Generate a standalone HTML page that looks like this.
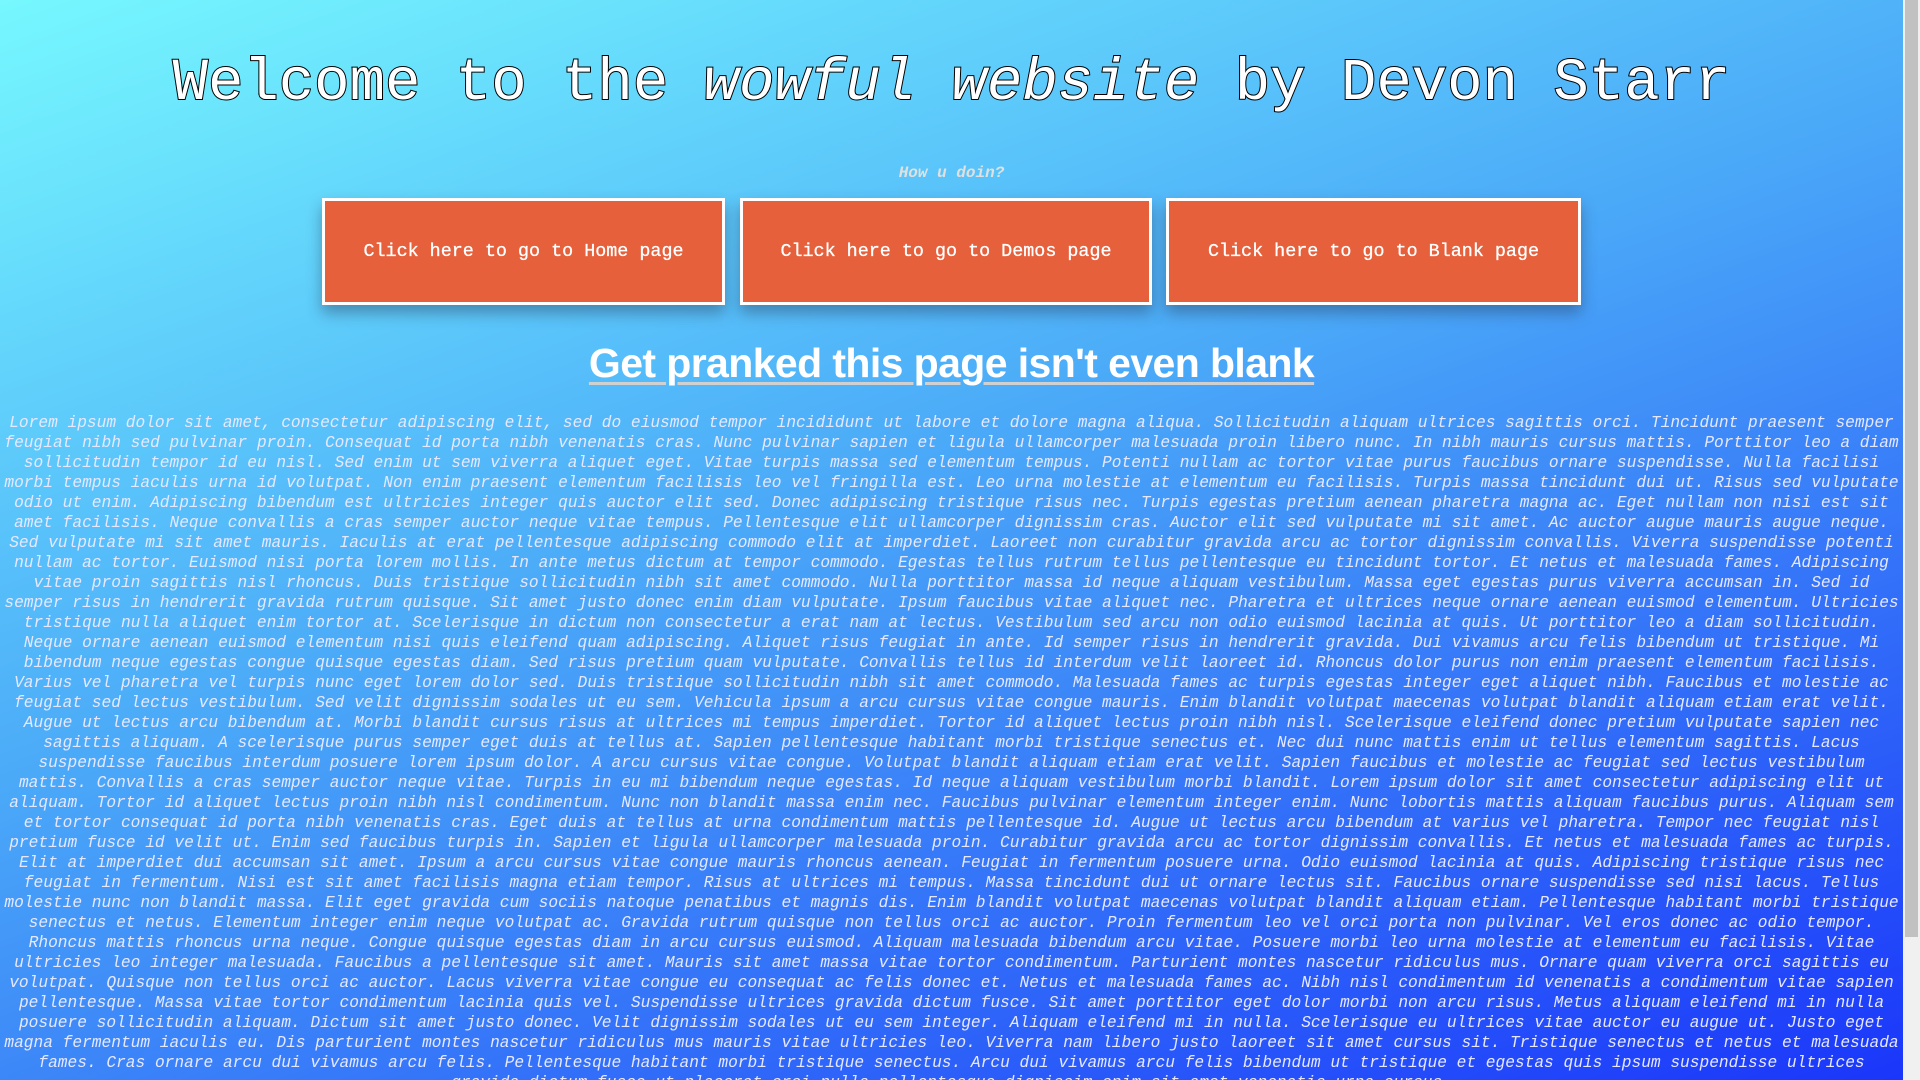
<!DOCTYPE html>
<html><head><meta charset="utf-8"><style>
html,body{margin:0;padding:0;width:1920px;height:1080px;overflow:hidden}
body{background:linear-gradient(160deg,#76f8fe 0%,#4aa8f8 45%,#1a35fa 100%);font-family:"Liberation Mono",monospace;position:relative}
.main{position:absolute;left:0;top:0;width:1903px;height:1080px;overflow:hidden}
h1{margin:0;position:absolute;top:44px;left:0;width:1903px;text-align:center;font-size:59px;font-weight:normal;color:#fff;line-height:80px;-webkit-text-stroke:2px #000;paint-order:stroke fill;white-space:nowrap}
.sub{position:absolute;top:164px;width:1903px;text-align:center;font-size:16px;font-style:italic;font-weight:bold;color:#e0e0e0}
.btn{position:absolute;top:198px;height:107px;box-sizing:border-box;border:3px solid #fff;background:#e6603c;color:#fff;font-size:18.4px;display:flex;align-items:center;justify-content:center;box-shadow:0 8px 14px rgba(40,60,90,.45);-webkit-text-stroke:0.3px #fff}
.h2{position:absolute;top:340px;width:1903px;text-align:center;font-family:"Liberation Sans",sans-serif;font-weight:bold;font-size:41px;letter-spacing:-0.6px;color:#fff;text-decoration:underline;text-decoration-color:#d0d0d0;text-decoration-thickness:3px;text-underline-offset:5px}
.lorem{position:absolute;top:413px;left:4px;width:1895px;text-align:center;font-style:italic;font-size:16.2px;line-height:20px;color:#e6e8ff;margin:0}
.sb{position:absolute;right:0;top:0;width:17px;height:1080px;background:#f0f0f0}
.th{position:absolute;left:2px;top:0;width:13px;height:937px;background:#c1c1c1}
</style></head><body>
<div class="main">
<h1>Welcome to the <i>wowful website</i> by Devon Starr</h1>
<div class="sub">How u doin?</div>
<div class="btn" style="left:322px;width:403px">Click here to go to Home page</div>
<div class="btn" style="left:740px;width:412px">Click here to go to Demos page</div>
<div class="btn" style="left:1166px;width:415px">Click here to go to Blank page</div>
<div class="h2">Get pranked this page isn't even blank</div>
<p class="lorem">Lorem ipsum dolor sit amet, consectetur adipiscing elit, sed do eiusmod tempor incididunt ut labore et dolore magna aliqua. Sollicitudin aliquam ultrices sagittis orci. Tincidunt praesent semper feugiat nibh sed pulvinar proin. Consequat id porta nibh venenatis cras. Nunc pulvinar sapien et ligula ullamcorper malesuada proin libero nunc. In nibh mauris cursus mattis. Porttitor leo a diam sollicitudin tempor id eu nisl. Sed enim ut sem viverra aliquet eget. Vitae turpis massa sed elementum tempus. Potenti nullam ac tortor vitae purus faucibus ornare suspendisse. Nulla facilisi morbi tempus iaculis urna id volutpat. Non enim praesent elementum facilisis leo vel fringilla est. Leo urna molestie at elementum eu facilisis. Turpis massa tincidunt dui ut. Risus sed vulputate odio ut enim. Adipiscing bibendum est ultricies integer quis auctor elit sed. Donec adipiscing tristique risus nec. Turpis egestas pretium aenean pharetra magna ac. Eget nullam non nisi est sit amet facilisis. Neque convallis a cras semper auctor neque vitae tempus. Pellentesque elit ullamcorper dignissim cras. Auctor elit sed vulputate mi sit amet. Ac auctor augue mauris augue neque. Sed vulputate mi sit amet mauris. Iaculis at erat pellentesque adipiscing commodo elit at imperdiet. Laoreet non curabitur gravida arcu ac tortor dignissim convallis. Viverra suspendisse potenti nullam ac tortor. Euismod nisi porta lorem mollis. In ante metus dictum at tempor commodo. Egestas tellus rutrum tellus pellentesque eu tincidunt tortor. Et netus et malesuada fames. Adipiscing vitae proin sagittis nisl rhoncus. Duis tristique sollicitudin nibh sit amet commodo. Nulla porttitor massa id neque aliquam vestibulum. Massa eget egestas purus viverra accumsan in. Sed id semper risus in hendrerit gravida rutrum quisque. Sit amet justo donec enim diam vulputate. Ipsum faucibus vitae aliquet nec. Pharetra et ultrices neque ornare aenean euismod elementum. Ultricies tristique nulla aliquet enim tortor at. Scelerisque in dictum non consectetur a erat nam at lectus. Vestibulum sed arcu non odio euismod lacinia at quis. Ut porttitor leo a diam sollicitudin. Neque ornare aenean euismod elementum nisi quis eleifend quam adipiscing. Aliquet risus feugiat in ante. Id semper risus in hendrerit gravida. Dui vivamus arcu felis bibendum ut tristique. Mi bibendum neque egestas congue quisque egestas diam. Sed risus pretium quam vulputate. Convallis tellus id interdum velit laoreet id. Rhoncus dolor purus non enim praesent elementum facilisis. Varius vel pharetra vel turpis nunc eget lorem dolor sed. Duis tristique sollicitudin nibh sit amet commodo. Malesuada fames ac turpis egestas integer eget aliquet nibh. Faucibus et molestie ac feugiat sed lectus vestibulum. Sed velit dignissim sodales ut eu sem. Vehicula ipsum a arcu cursus vitae congue mauris. Enim blandit volutpat maecenas volutpat blandit aliquam etiam erat velit. Augue ut lectus arcu bibendum at. Morbi blandit cursus risus at ultrices mi tempus imperdiet. Tortor id aliquet lectus proin nibh nisl. Scelerisque eleifend donec pretium vulputate sapien nec sagittis aliquam. A scelerisque purus semper eget duis at tellus at. Sapien pellentesque habitant morbi tristique senectus et. Nec dui nunc mattis enim ut tellus elementum sagittis. Lacus suspendisse faucibus interdum posuere lorem ipsum dolor. A arcu cursus vitae congue. Volutpat blandit aliquam etiam erat velit. Sapien faucibus et molestie ac feugiat sed lectus vestibulum mattis. Convallis a cras semper auctor neque vitae. Turpis in eu mi bibendum neque egestas. Id neque aliquam vestibulum morbi blandit. Lorem ipsum dolor sit amet consectetur adipiscing elit ut aliquam. Tortor id aliquet lectus proin nibh nisl condimentum. Nunc non blandit massa enim nec. Faucibus pulvinar elementum integer enim. Nunc lobortis mattis aliquam faucibus purus. Aliquam sem et tortor consequat id porta nibh venenatis cras. Eget duis at tellus at urna condimentum mattis pellentesque id. Augue ut lectus arcu bibendum at varius vel pharetra. Tempor nec feugiat nisl pretium fusce id velit ut. Enim sed faucibus turpis in. Sapien et ligula ullamcorper malesuada proin. Curabitur gravida arcu ac tortor dignissim convallis. Et netus et malesuada fames ac turpis. Elit at imperdiet dui accumsan sit amet. Ipsum a arcu cursus vitae congue mauris rhoncus aenean. Feugiat in fermentum posuere urna. Odio euismod lacinia at quis. Adipiscing tristique risus nec feugiat in fermentum. Nisi est sit amet facilisis magna etiam tempor. Risus at ultrices mi tempus. Massa tincidunt dui ut ornare lectus sit. Faucibus ornare suspendisse sed nisi lacus. Tellus molestie nunc non blandit massa. Elit eget gravida cum sociis natoque penatibus et magnis dis. Enim blandit volutpat maecenas volutpat blandit aliquam etiam. Pellentesque habitant morbi tristique senectus et netus. Elementum integer enim neque volutpat ac. Gravida rutrum quisque non tellus orci ac auctor. Proin fermentum leo vel orci porta non pulvinar. Vel eros donec ac odio tempor. Rhoncus mattis rhoncus urna neque. Congue quisque egestas diam in arcu cursus euismod. Aliquam malesuada bibendum arcu vitae. Posuere morbi leo urna molestie at elementum eu facilisis. Vitae ultricies leo integer malesuada. Faucibus a pellentesque sit amet. Mauris sit amet massa vitae tortor condimentum. Parturient montes nascetur ridiculus mus. Ornare quam viverra orci sagittis eu volutpat. Quisque non tellus orci ac auctor. Lacus viverra vitae congue eu consequat ac felis donec et. Netus et malesuada fames ac. Nibh nisl condimentum id venenatis a condimentum vitae sapien pellentesque. Massa vitae tortor condimentum lacinia quis vel. Suspendisse ultrices gravida dictum fusce. Sit amet porttitor eget dolor morbi non arcu risus. Metus aliquam eleifend mi in nulla posuere sollicitudin aliquam. Dictum sit amet justo donec. Velit dignissim sodales ut eu sem integer. Aliquam eleifend mi in nulla. Scelerisque eu ultrices vitae auctor eu augue ut. Justo eget magna fermentum iaculis eu. Dis parturient montes nascetur ridiculus mus mauris vitae ultricies leo. Viverra nam libero justo laoreet sit amet cursus sit. Tristique senectus et netus et malesuada fames. Cras ornare arcu dui vivamus arcu felis. Pellentesque habitant morbi tristique senectus. Arcu dui vivamus arcu felis bibendum ut tristique et egestas quis ipsum suspendisse ultrices gravida dictum fusce ut placerat orci nulla pellentesque dignissim enim sit amet venenatis urna cursus.</p>
</div>
<div class="sb"><div class="th"></div></div>
</body></html>
